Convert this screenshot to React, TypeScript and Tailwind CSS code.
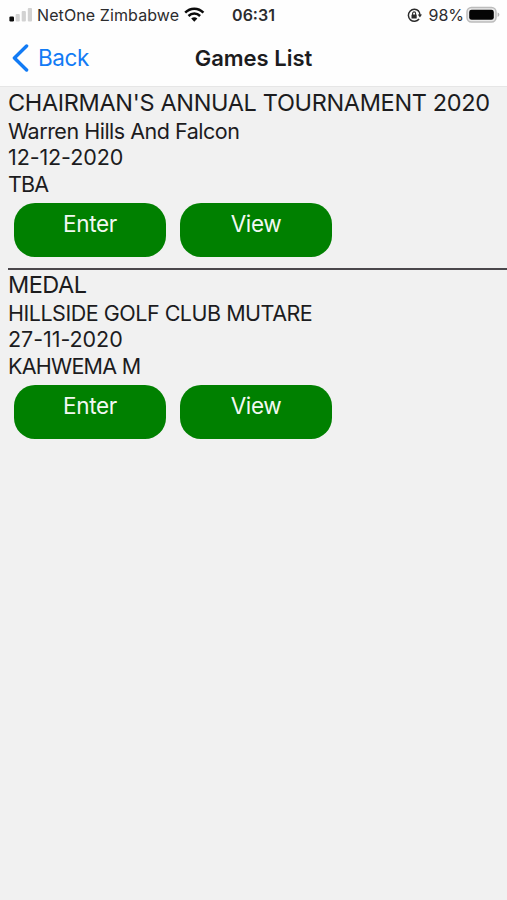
import React from "react";

type Game = { title: string; titleClass: string; lines: { text: string; className: string }[] };

const games: Game[] = [
  {
    title: "CHAIRMAN'S ANNUAL TOURNAMENT 2020",
    titleClass: "tracking-[-0.34px]",
    lines: [
      { text: "Warren Hills And Falcon", className: "tracking-[-0.49px]" },
      { text: "12-12-2020", className: "tracking-[-0.1px]" },
      { text: "TBA", className: "tracking-[-0.8px]" },
    ],
  },
  {
    title: "MEDAL",
    titleClass: "tracking-[-0.5px]",
    lines: [
      { text: "HILLSIDE GOLF CLUB MUTARE", className: "tracking-[-0.49px]" },
      { text: "27-11-2020", className: "tracking-[-0.05px]" },
      { text: "KAHWEMA M", className: "tracking-[-0.75px]" },
    ],
  },
];

function GameButton({ label }: { label: string }) {
  return (
    <button className="flex h-[54px] w-[152px] items-start justify-center rounded-[21px] bg-[#008000] pt-[7px] text-[22.5px] leading-[28px] tracking-[-0.35px] text-[#f2f8f2]">
      <span>{label}</span>
    </button>
  );
}

function GameItem({ game, divided }: { game: Game; divided: boolean }) {
  return (
    <section className={`ml-2 flex h-[182px] flex-col border-[#4a474b] ${divided ? "border-b-2" : ""}`}>
      <h2 className={`h-[30px] text-[23.5px] leading-[30px] whitespace-nowrap ${game.titleClass}`}>
        <span>{game.title}</span>
      </h2>
      {game.lines.map((line) => (
        <p key={line.text} className={`text-[21.5px] leading-[26.4px] whitespace-nowrap ${line.className}`}>
          <span>{line.text}</span>
        </p>
      ))}
      <div className="mt-[6px] ml-[6px] flex gap-[14px]">
        <GameButton label="Enter" />
        <GameButton label="View" />
      </div>
    </section>
  );
}

function StatusBar() {
  return (
    <div className="grid h-[30px] grid-cols-[1fr_auto_1fr] items-center text-[#2c2c2e]">
      <div className="flex items-center pl-[9px]">
        <svg width="24" height="16" viewBox="0 0 24 16">
          <rect x="0.4" y="9.4" width="4.6" height="5" rx="1.2" fill="#0b0b0b" />
          <rect x="6.6" y="7" width="4.2" height="7.4" rx="1" fill="#d2d2d2" />
          <rect x="12.7" y="4" width="4.2" height="10.4" rx="1" fill="#d2d2d2" />
          <rect x="18.8" y="1" width="4.2" height="13.4" rx="1" fill="#d2d2d2" />
        </svg>
        <span className="ml-[4px] text-[16px] tracking-[0.1px] whitespace-nowrap">NetOne Zimbabwe</span>
        <svg className="ml-[5px] -mt-px" width="21" height="15" viewBox="0 0 21 15" fill="none" stroke="#0b0b0b" strokeWidth="2.5">
          <path d="M1.2 5.6C6.3.4 14.3.4 19.4 5.6" />
          <path d="M4.5 9C7.8 5.8 12.8 5.8 16.1 9" />
          <path d="M10.3 14.7 7.2 11.6Q10.3 8.9 13.4 11.6Z" fill="#0b0b0b" stroke="none" />
        </svg>
      </div>
      <span className="text-[16px] font-semibold">06:31</span>
      <div className="flex items-center justify-end pr-[7px]">
        <svg width="15" height="15" viewBox="0 0 15 15" fill="none" stroke="#2b2b2b" strokeWidth="1.5">
          <path d="M11.7 3.1A6 6 0 1 0 12.1 11" />
          <path d="M11 2.5A6 6 0 0 1 13 7" />
          <path d="M10.8 6.5H15L12.9 9.4Z" fill="#2b2b2b" stroke="none" />
          <rect x="4.5" y="6.5" width="5.2" height="4" rx=".5" fill="#2b2b2b" stroke="none" />
          <path d="M5.6 7V5.4a1.5 1.5 0 0 1 3 0V7" strokeWidth="1.1" />
        </svg>
        <span className="ml-[6px] text-[16px]">98%</span>
        <svg className="ml-[2px] -mt-px" width="34" height="18" viewBox="0 0 34 18">
          <rect x="1" y="1.5" width="29" height="14.5" rx="4.4" fill="#e9e9e9" stroke="#bcbcbc" strokeWidth="1.5" />
          <rect x="3.2" y="3.7" width="24.6" height="10.1" rx="2.4" fill="#050505" />
          <path d="M31.6 6.6Q33.4 7.2 33.4 8.8 33.4 10.4 31.6 11Z" fill="#b5b5b5" />
        </svg>
      </div>
    </div>
  );
}

export default function App() {
  return (
    <main className="flex h-[900px] w-[507px] flex-col overflow-hidden bg-[#f1f1f1] font-['Inter',sans-serif] text-[#1c1c1e]">
      <header className="h-[87px] border-b border-[#e6e6e6] bg-[#fefefe]">
        <StatusBar />
        <nav className="grid h-[56px] grid-cols-[1fr_auto_1fr] items-center">
          <button className="flex items-center pl-[12px] text-[#127bf5]">
            <svg width="18" height="28" viewBox="0 0 18 28" fill="none" stroke="currentColor" strokeWidth="3.4" strokeLinecap="round" strokeLinejoin="round">
              <path d="M14.6 2 2.4 14l12.2 12" />
            </svg>
            <span className="ml-[8px] text-[22.5px] tracking-[-0.4px]">Back</span>
          </button>
          <h1 className="text-[22px] font-semibold">
            <span>Games List</span>
          </h1>
        </nav>
      </header>
      <div className="flex flex-col pt-px">
        {games.map((game, i) => (
          <GameItem key={game.title} game={game} divided={i < games.length - 1} />
        ))}
      </div>
    </main>
  );
}
